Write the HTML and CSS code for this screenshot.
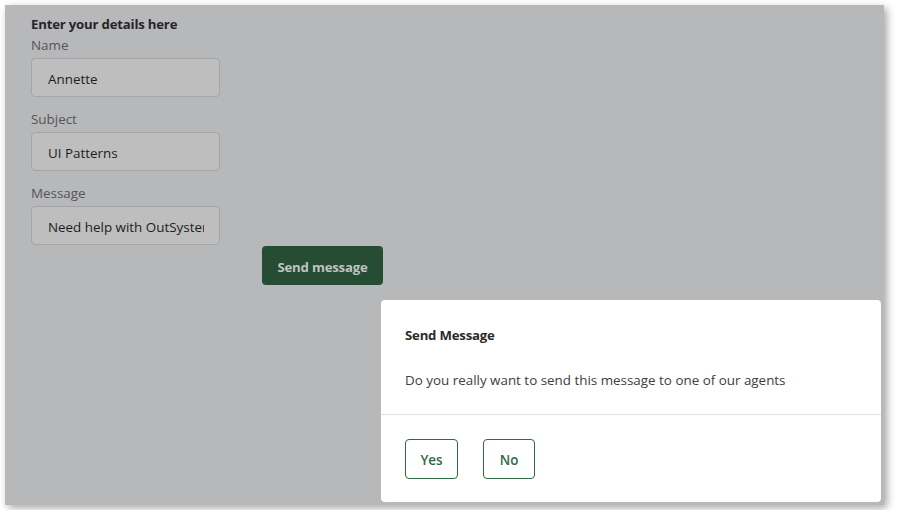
FILE: index.html
```html
<!DOCTYPE html>
<html lang="en">
<head>
<meta charset="utf-8">
<title>Send Message</title>
<link rel="stylesheet" href="styles.css">
</head>
<body>
<div class="frame">
  <form class="form">
    <h2 class="form-title">Enter your details here</h2>
    <div class="field">
      <label class="label">Name</label>
      <div class="input"><span class="input-value">Annette</span></div>
    </div>
    <div class="field">
      <label class="label">Subject</label>
      <div class="input"><span class="input-value">UI Patterns</span></div>
    </div>
    <div class="field">
      <label class="label">Message</label>
      <div class="input"><span class="input-value">Need help with OutSystems</span></div>
    </div>
    <div class="actions">
      <button type="button" class="btn-primary">Send message</button>
    </div>
  </form>
  <div class="modal">
    <div class="modal-body">
      <div class="modal-title">Send Message</div>
      <p class="modal-text">Do you really want to send this message to one of our agents</p>
    </div>
    <div class="modal-footer">
      <button type="button" class="btn-outline btn-yes">Yes</button>
      <button type="button" class="btn-outline btn-no">No</button>
    </div>
  </div>
</div>
</body>
</html>
```
FILE: styles.css
```css
html, body {
  margin: 0;
  padding: 0;
  background: #ffffff;
}
body {
  padding: 5px;
  font-family: "Open Sans", "Noto Sans", sans-serif;
  font-size: 13.4px;
}
.frame {
  position: relative;
  width: 879px;
  height: 500px;
  background: #b7b8ba;
  box-shadow: 3px 3px 8px rgba(0, 0, 0, 0.35);
  box-sizing: border-box;
  padding: 10px 0 0 26px;
}
.form {
  display: flex;
  flex-direction: column;
  width: 352px;
}
.form-title {
  margin: -1px 0 1px 0;
  font-size: 13.2px;
  font-weight: 700;
  line-height: 20px;
  color: #262626;
  letter-spacing: -0.2px;
}
.field {
  display: flex;
  flex-direction: column;
  gap: 3px;
  margin-bottom: 12px;
}
.field:nth-of-type(3) { margin-bottom: 0; }
.label {
  line-height: 20px;
  color: #555557;
}
.input {
  box-sizing: border-box;
  width: 189px;
  height: 39px;
  padding: 2px 15px 0 16px;
  display: flex;
  align-items: center;
  background: #bebebe;
  border: 1px solid #a4a5a7;
  border-radius: 4px;
  color: #1d1d1d;
}
.input-value {
  display: block;
  width: 100%;
  white-space: nowrap;
  overflow: hidden;
}
.actions {
  display: flex;
  justify-content: flex-end;
  margin-top: 1px;
}
.btn-primary {
  width: 121px;
  height: 39px;
  border: none;
  border-radius: 4px;
  background: #264c33;
  color: #bfc4c0;
  font-family: inherit;
  font-size: 13.2px;
  font-weight: 700;
  letter-spacing: -0.2px;
  padding: 2px 0 0 0;
}
.modal {
  position: absolute;
  right: 3px;
  bottom: 3px;
  width: 500px;
  height: 202px;
  background: #ffffff;
  border-radius: 4px;
  display: flex;
  flex-direction: column;
}
.modal-body {
  padding: 24px 24px 0 24px;
  height: 115px;
  box-sizing: border-box;
  border-bottom: 1px solid #e2e2e2;
}
.modal-title {
  font-weight: 700;
  font-size: 13.2px;
  letter-spacing: -0.2px;
  line-height: 22px;
  color: #2b2b2b;
}
.modal-text {
  margin: 23px 0 0 0;
  line-height: 22px;
  color: #404040;
}
.modal-footer {
  display: flex;
  gap: 25px;
  padding: 24px 24px 0 24px;
}
.btn-outline {
  height: 40px;
  padding: 1px 0 0 0;
  background: #ffffff;
  border: 1px solid #2f6b42;
  border-radius: 4px;
  color: #2f6b42;
  font-family: inherit;
  font-size: 13.4px;
  font-weight: 600;
}
.btn-yes { width: 53px; }
.btn-no { width: 52px; }
```
